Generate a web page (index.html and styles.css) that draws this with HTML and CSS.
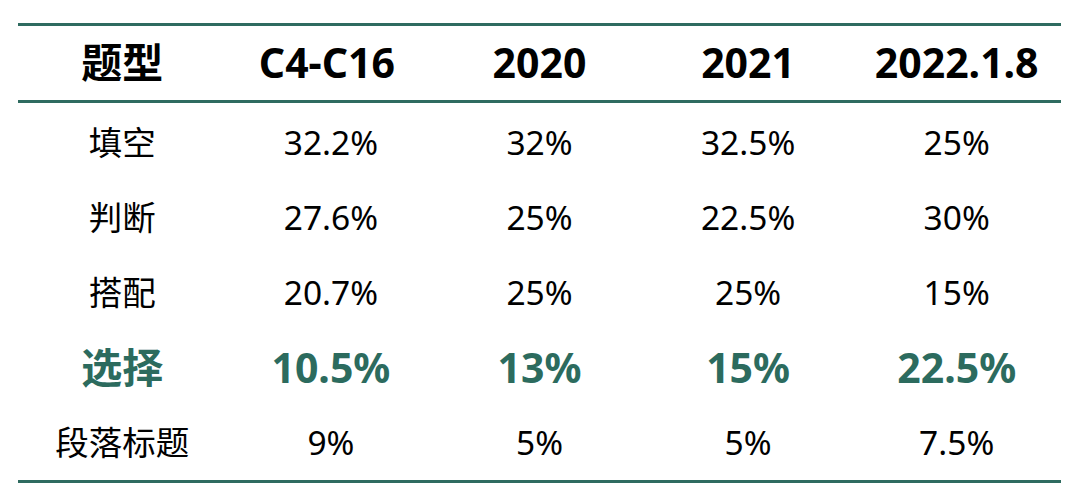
FILE: index.html
```html
<!DOCTYPE html>
<html lang="zh">
<head>
<meta charset="utf-8">
<link rel="stylesheet" href="styles.css">
</head>
<body>
<div class="wrap">
<table class="tbl">
  <thead>
    <tr><th>题型</th><th>C4-C16</th><th>2020</th><th>2021</th><th>2022.1.8</th></tr>
  </thead>
  <tbody>
    <tr><td>填空</td><td>32.2%</td><td>32%</td><td>32.5%</td><td>25%</td></tr>
    <tr><td>判断</td><td>27.6%</td><td>25%</td><td>22.5%</td><td>30%</td></tr>
    <tr><td>搭配</td><td>20.7%</td><td>25%</td><td>25%</td><td>15%</td></tr>
    <tr class="hl"><td>选择</td><td>10.5%</td><td>13%</td><td>15%</td><td>22.5%</td></tr>
    <tr><td>段落标题</td><td>9%</td><td>5%</td><td>5%</td><td>7.5%</td></tr>
  </tbody>
</table>
</div>
</body>
</html>
```
FILE: styles.css
```css
html, body {
  margin: 0;
  padding: 0;
  background: #ffffff;
}
.wrap {
  padding: 23px 0 0 18px;
}
.tbl {
  width: 1043px;
  border-collapse: collapse;
  table-layout: fixed;
  font-family: "Noto Sans", "Noto Sans CJK SC", sans-serif;
  color: #000;
}
.tbl thead tr {
  border-top: 3px solid #2f6b60;
  border-bottom: 3px solid #2f6b60;
}
.tbl tbody tr:last-child {
  border-bottom: 3px solid #2f6b60;
}
.tbl th {
  height: 74px;
  padding: 0;
  font-size: 41px;
  font-weight: 700;
  line-height: 1.2;
  text-align: center;
  vertical-align: middle;
}
.tbl th:nth-child(2) {
  padding-right: 8px;
}
.tbl td {
  height: 75px;
  padding: 0;
  font-size: 33.5px;
  font-weight: 400;
  line-height: 1.2;
  text-align: center;
  vertical-align: middle;
}
.tbl tbody tr:first-child td {
  height: 75px;
  padding-top: 2px;
}
.tbl tr.hl td {
  color: #2c6b5e;
  font-size: 41px;
  font-weight: 700;
}
```
